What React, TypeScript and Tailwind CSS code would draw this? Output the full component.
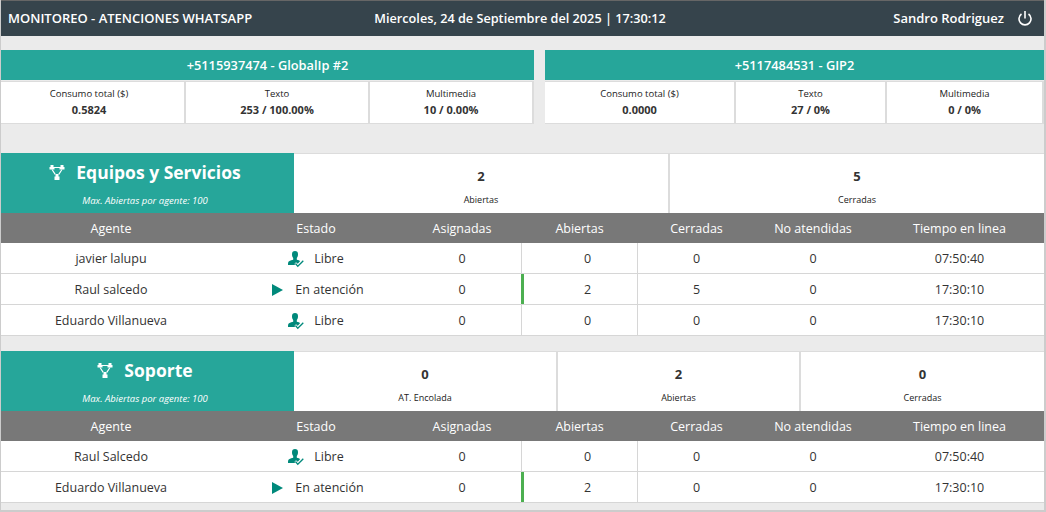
const font = { fontFamily: '"Open Sans", "Noto Sans", sans-serif' }

type Stat = { label: string; value: string; width: string }
type Agent = { name: string; busy?: boolean; asignadas: number; abiertas: number; cerradas: number; noAtendidas: number; tiempo: string }

const line1: Stat[] = [
  { label: 'Consumo total ($)', value: '0.5824', width: 'w-[185px] pr-[7px]' },
  { label: 'Texto', value: '253 / 100.00%', width: 'w-[184px]' },
  { label: 'Multimedia', value: '10 / 0.00%', width: 'flex-1' },
]
const line2: Stat[] = [
  { label: 'Consumo total ($)', value: '0.0000', width: 'w-[191px]' },
  { label: 'Texto', value: '27 / 0%', width: 'w-[151px]' },
  { label: 'Multimedia', value: '0 / 0%', width: 'flex-1' },
]

const equipos: Agent[] = [
  { name: 'javier lalupu', asignadas: 0, abiertas: 0, cerradas: 0, noAtendidas: 0, tiempo: '07:50:40' },
  { name: 'Raul salcedo', busy: true, asignadas: 0, abiertas: 2, cerradas: 5, noAtendidas: 0, tiempo: '17:30:10' },
  { name: 'Eduardo Villanueva', asignadas: 0, abiertas: 0, cerradas: 0, noAtendidas: 0, tiempo: '17:30:10' },
]
const soporte: Agent[] = [
  { name: 'Raul Salcedo', asignadas: 0, abiertas: 0, cerradas: 0, noAtendidas: 0, tiempo: '07:50:40' },
  { name: 'Eduardo Villanueva', busy: true, asignadas: 0, abiertas: 2, cerradas: 0, noAtendidas: 0, tiempo: '17:30:10' },
]

const gridCols = 'grid grid-cols-[220px_182px_118px_117px_117px_116px_1fr]'

function TeamIcon() {
  return (
    <svg width="16" height="15" viewBox="0 0 16 15" fill="white" className="shrink-0">
      <path d="M1.500 0h3v2h1v2.500H.5V2h1zM11.500 0h3v2h1v2.500h-5V2h1zM6.500 9h3v2.500h1V15h-5v-3.500h1z" />
      <path d="M5 2h6v1H5z" />
      <path d="M2.400 4.500h1.300l3 4.500-1 .7zM13.600 4.500h-1.300l-3 4.500 1 .7z" />
    </svg>
  )
}

function FreeIcon() {
  return (
    <svg width="16" height="17" viewBox="0 0 16 17" className="shrink-0">
      <path fill="#00897b" d="M7 0c2 0 3 1.200 3 3.200 0 1.700-.5 3-1.200 3.800v1.800c1.500.3 2.700.7 3.400 1.300l-2.400 2.600L8 11.300 6.400 13l1 1H0c0-2.400.2-3.300 1.500-4 1.100-.5 2.200-.8 3.700-1.200V7C4.500 6.200 4 4.900 4 3.200 4 1.200 5 0 7 0z" />
      <path fill="none" stroke="#00897b" strokeWidth="1.300" d="M7.500 12.500l2.300 2.800 5.500-5.500" />
    </svg>
  )
}

function PlayIcon() {
  return (
    <svg width="11" height="12" viewBox="0 0 11 12" className="shrink-0">
      <path fill="#00897b" d="M0 0l11 6-11 6z" />
    </svg>
  )
}

function PowerIcon() {
  return (
    <svg width="14" height="15" viewBox="0 0 14 15" fill="none" stroke="white" strokeWidth="1.600" className="shrink-0">
      <path d="M7 0v7.500" />
      <path d="M3.500 3a6 6 0 1 0 7 0" />
    </svg>
  )
}

function LineCard({ title, stats, className }: { title: string; stats: Stat[]; className: string }) {
  return (
    <div className={className}>
      <div className="h-[30px] pt-px bg-[#26a69a] flex items-center justify-center text-white text-[12.800px] font-semibold">
        {title}
      </div>
      <div className="flex h-[43px] bg-white border-t border-b border-[#dcdcdc] mt-[1px]">
        {stats.map((s) => (
          <div key={s.label} className={`${s.width} flex flex-col items-center justify-center pb-px border-r-2 border-[#dcdcdc]`}>
            <span className="text-[9.500px] leading-[16px] text-[#222]">{s.label}</span>
            <span className="text-[11px] leading-[16px] font-bold text-[#333]">{s.value}</span>
          </div>
        ))}
      </div>
    </div>
  )
}

function Counter({ value, label, className }: { value: number; label: string; className: string }) {
  return (
    <div className={`${className} h-full flex flex-col items-center border-r-2 border-[#dcdcdc] last:border-r-0`}>
      <span className="mt-[13px] text-[13px] leading-[18px] font-bold text-[#333]">{value}</span>
      <span className="mt-[8px] text-[9px] leading-[14px] text-[#222]">{label}</span>
    </div>
  )
}

function Section({ title, counters, agents }: { title: string; counters: React.ReactNode; agents: Agent[] }) {
  return (
    <section>
      <div className="flex h-[60px] bg-white border-t border-[#dcdcdc]">
        <div className="w-[293px] pr-[5px] bg-[#26a69a] text-white flex flex-col items-center shrink-0 -mt-px h-[60px]">
          <div className="flex items-center gap-[11px] mt-[6px] h-[26px]">
            <TeamIcon />
            <span className="text-[17.500px] font-bold">{title}</span>
          </div>
          <span className="mt-[10px] text-[9.500px] italic leading-[12px]">Max. Abiertas por agente: 100</span>
        </div>
        <div className="flex flex-1 h-full">{counters}</div>
      </div>
      <div className={`${gridCols} h-[30px] pt-[2px] bg-[#787878] text-white text-[12.500px] items-center text-center`}>
        <span>Agente</span>
        <span className="pl-2">Estado</span>
        <span>Asignadas</span>
        <span>Abiertas</span>
        <span>Cerradas</span>
        <span>No atendidas</span>
        <span className="pl-1">Tiempo en linea</span>
      </div>
      {agents.map((a) => (
        <div key={a.name} className={`${gridCols} h-[31px] bg-white border-b border-[#d6d6d6] text-[12.500px] text-[#333] items-center text-center`}>
          <span className="pt-[2px]">{a.name}</span>
          <span className={`pt-[2px] flex items-center justify-center ${a.busy ? 'pl-3 gap-[12px]' : 'pl-2 gap-[10px]'}`}>
            {a.busy ? <PlayIcon /> : <FreeIcon />}
            {a.busy ? 'En atención' : 'Libre'}
          </span>
          <span className="pt-[2px]">{a.asignadas}</span>
          <span className={`h-full pt-[2px] flex items-center justify-center border-r border-[#d6d6d6] ${a.abiertas > 0 ? 'pl-[14px] border-l-[3px] border-l-[#4caf50]' : 'pl-4 border-l border-l-[#d6d6d6]'}`}>{a.abiertas}</span>
          <span className="pt-[2px]">{a.cerradas}</span>
          <span className="pt-[2px]">{a.noAtendidas}</span>
          <span className="pt-[2px] pl-1">{a.tiempo}</span>
        </div>
      ))}
    </section>
  )
}

export default function App() {
  return (
    <div style={font} className="w-[1046px] h-[512px] overflow-hidden bg-[#ebebeb] flex flex-col border-l border-r-2 border-b-2 border-[#cccccc]">
      <header className="h-[36px] shrink-0 bg-[#36444c] border-t border-[#666] text-white flex items-center text-[13px] font-semibold">
        <span className="w-[369px] pl-[7px]">MONITOREO - ATENCIONES WHATSAPP</span>
        <span className="w-[300px] text-center text-[12.700px]">Miercoles, 24 de Septiembre del 2025 | 17:30:12</span>
        <span className="ml-auto">Sandro Rodriguez</span>
        <span className="ml-[14px] mr-[12px]"><PowerIcon /></span>
      </header>

      <div className="flex mt-[14px] gap-[11px]">
        <LineCard title="+5115937474 - GlobalIp #2" stats={line1} className="w-[533px]" />
        <LineCard title="+5117484531 - GIP2" stats={line2} className="flex-1" />
      </div>

      <div className="mt-[29px]">
        <Section
          title="Equipos y Servicios"
          agents={equipos}
          counters={
            <>
              <Counter value={2} label="Abiertas" className="w-[376px]" />
              <Counter value={5} label="Cerradas" className="flex-1" />
            </>
          }
        />
      </div>

      <div className="mt-[15px]">
        <Section
          title="Soporte"
          agents={soporte}
          counters={
            <>
              <Counter value={0} label="AT. Encolada" className="w-[264px]" />
              <Counter value={2} label="Abiertas" className="w-[243px]" />
              <Counter value={0} label="Cerradas" className="flex-1" />
            </>
          }
        />
      </div>
    </div>
  )
}
